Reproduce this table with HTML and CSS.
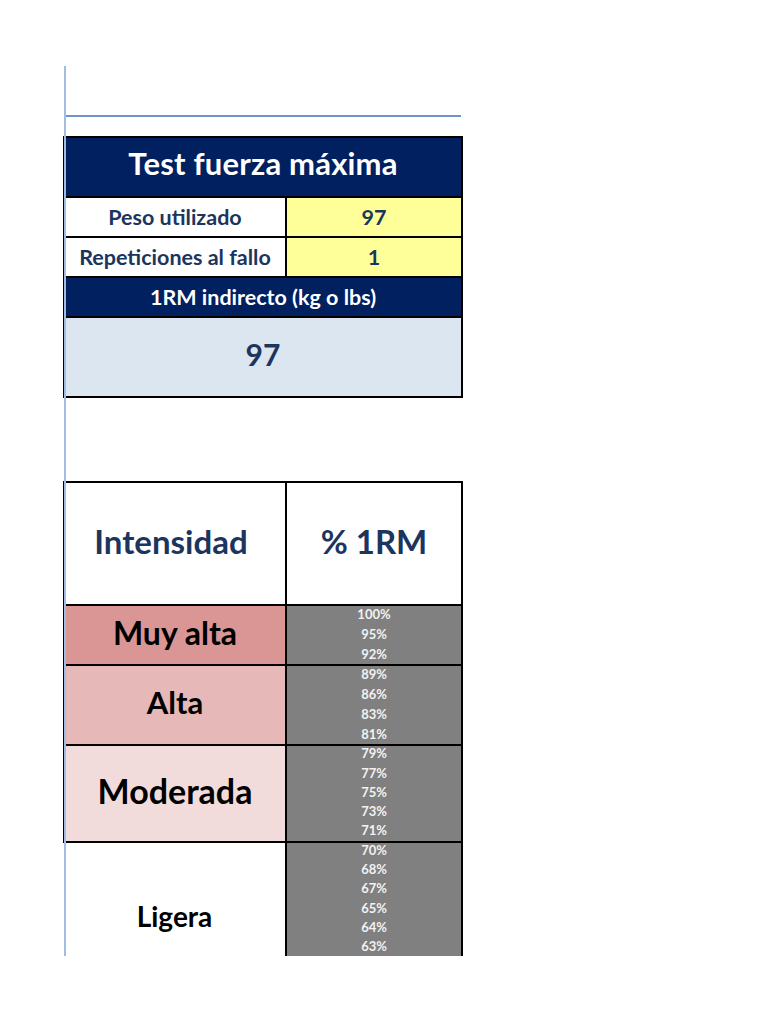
FILE: index.html
```html
<!DOCTYPE html>
<html lang="es">
<head>
<meta charset="utf-8">
<title>Test fuerza máxima</title>
<link rel="stylesheet" href="styles.css">
</head>
<body>
<div class="page">
  <div class="freeze-v"></div>
  <div class="sheet">
    <div class="freeze-h"></div>

    <table class="test">
      <colgroup><col class="c1"><col class="c2"></colgroup>
      <tr class="r-title"><th colspan="2"><span class="up title-text">Test fuerza máxima</span></th></tr>
      <tr class="r-input"><td class="lbl">Peso utilizado</td><td class="inp">97</td></tr>
      <tr class="r-input"><td class="lbl">Repeticiones al fallo</td><td class="inp">1</td></tr>
      <tr class="r-sub"><th colspan="2">1RM indirecto (kg o lbs)</th></tr>
      <tr class="r-result"><td colspan="2"><span class="up">97</span></td></tr>
    </table>

    <table class="intens">
      <colgroup><col class="c1"><col class="c2"></colgroup>
      <tr class="r-head"><th><span class="up shift-l">Intensidad</span></th><th><span class="up">% 1RM</span></th></tr>
      <tr class="r-muy"><td class="name"><span class="up">Muy alta</span></td><td class="pct"><div class="list"><span>100%</span><span>95%</span><span>92%</span></div></td></tr>
      <tr class="r-alta"><td class="name"><span class="up">Alta</span></td><td class="pct"><div class="list"><span>89%</span><span>86%</span><span>83%</span><span>81%</span></div></td></tr>
      <tr class="r-mod"><td class="name"><span class="up">Moderada</span></td><td class="pct"><div class="list"><span>79%</span><span>77%</span><span>75%</span><span>73%</span><span>71%</span></div></td></tr>
      <tr class="r-lig"><td class="name"><span class="down">Ligera</span></td><td class="pct"><div class="list"><span>70%</span><span>68%</span><span>67%</span><span>65%</span><span>64%</span><span>63%</span></div></td></tr>
    </table>
  </div>
</div>
</body>
</html>
```

FILE: styles.css
```css
html, body {
  margin: 0;
  padding: 0;
  background: #ffffff;
}

body {
  font-family: Lato, "Liberation Sans", sans-serif;
  font-weight: 700;
}

.page {
  position: relative;
  padding: 115px 0 0 63px;
}

.freeze-v {
  position: absolute;
  left: 64px;
  top: 66px;
  width: 2px;
  height: 890px;
  background: #a3bde2;
  z-index: 2;
}

.sheet {
  width: 398px;
}

.freeze-h {
  height: 2px;
  background: #6f95c8;
  margin-left: 1px;
  margin-bottom: 19px;
}

table {
  border-collapse: collapse;
  width: 398px;
  table-layout: fixed;
}

col.c1 { width: 222px; }
col.c2 { width: 176px; }

td, th {
  padding: 0;
  text-align: center;
  vertical-align: middle;
  font-weight: 700;
}

.up {
  display: inline-block;
  position: relative;
  top: -3px;
}

.title-text {
  top: -4px;
}

.shift-l {
  left: -4px;
}

.down {
  display: inline-block;
  position: relative;
  top: 16px;
}

/* ---------- Test table ---------- */
.test {
  border: 2px solid #000;
}

.test td, .test th {
  border: 2px solid #000;
}

.r-title th {
  height: 58px;
  background: #002060;
  color: #ffffff;
  font-size: 31px;
  letter-spacing: 0.2px;
}

.r-input td {
  height: 38px;
  font-size: 21.5px;
  color: #1c355e;
}

.r-input .lbl {
  background: #ffffff;
}

.r-input .inp {
  background: #ffff99;
}

.r-sub th {
  height: 38px;
  background: #002060;
  color: #ffffff;
  font-size: 21.5px;
}

.r-result td {
  height: 78px;
  background: #dce6f1;
  color: #1c355e;
  font-size: 30px;
}

/* ---------- Intensity table ---------- */
.intens {
  margin-top: 83px;
}

.intens th, .intens td {
  border: 2px solid #000;
}

.r-head th {
  height: 121px;
  background: #ffffff;
  color: #1c355e;
  font-size: 33px;
}

.name {
  color: #000;
}

.r-muy td { height: 58px; }
.r-alta td { height: 78px; }
.r-mod td { height: 95px; }
.r-lig td { height: 113px; border-bottom: none; }
.r-lig .name { border-left: none; }

.r-muy .name { background: #da9694; font-size: 32px; }
.r-alta .name { background: #e6b8b7; font-size: 31px; }
.r-mod .name { background: #f2dcdb; font-size: 34px; }
.r-lig .name { background: #ffffff; font-size: 28px; }

.pct {
  background: #808080;
}

.list {
  display: flex;
  flex-direction: column;
  align-items: center;
  margin: -3px 0 -1px;
  color: #f2f2f2;
  font-size: 13px;
  line-height: 20px;
}

.r-mod .list {
  line-height: 19.3px;
}

.r-lig .list {
  line-height: 19.2px;
}
```
